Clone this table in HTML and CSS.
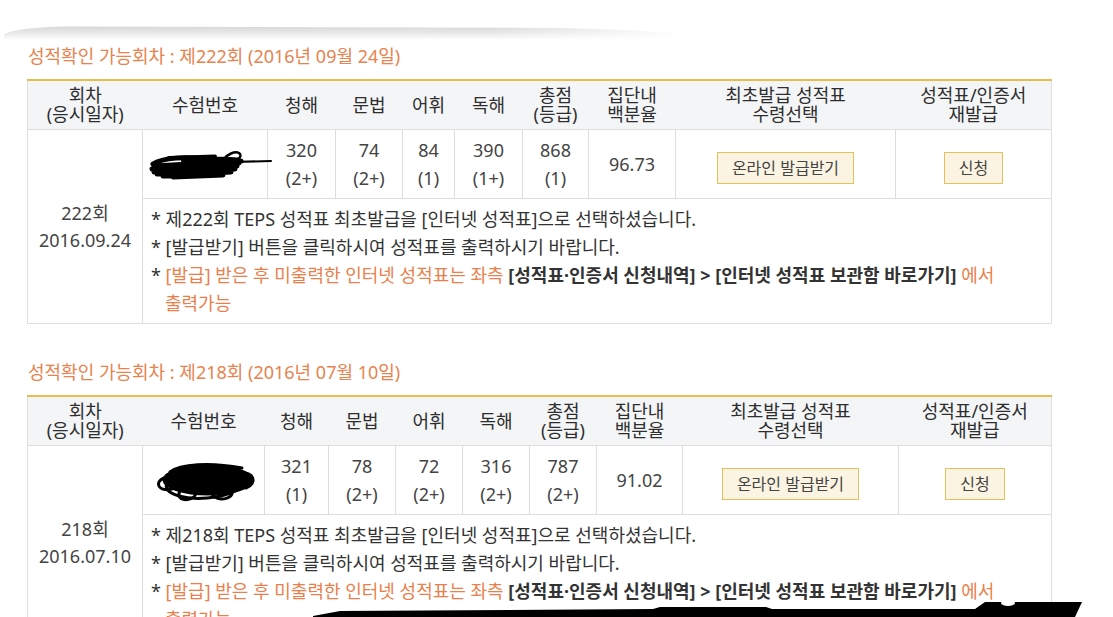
FILE: index.html
```html
<!DOCTYPE html>
<html lang="ko">
<head>
<meta charset="utf-8">
<title>성적확인</title>
<link rel="stylesheet" href="styles.css">
</head>
<body>
<div class="page">
  <svg class="curl" width="700" height="50" viewBox="0 0 700 50" aria-hidden="true">
    <defs>
      <linearGradient id="curlV" x1="0" y1="0" x2="0" y2="1">
        <stop offset="0" stop-color="#d8d8d8"/>
        <stop offset="0.5" stop-color="#e9e9e9"/>
        <stop offset="1" stop-color="#ffffff"/>
      </linearGradient>
      <linearGradient id="curlH" x1="0" y1="0" x2="1" y2="0">
        <stop offset="0" stop-color="#fff"/>
        <stop offset="0.7" stop-color="#fff"/>
        <stop offset="1" stop-color="#000"/>
      </linearGradient>
      <mask id="curlMask"><rect width="700" height="50" fill="url(#curlH)"/></mask>
    </defs>
    <path d="M4 34 C 14 30, 30 27, 70 26.5 L 560 28 C 610 29, 650 31, 680 34 L 680 39 L 4 40 Z" fill="url(#curlV)" mask="url(#curlMask)"/>
  </svg>

  <section class="round">
    <h2 class="round-title">성적확인 가능회차 : 제222회 (2016년 09월 24일)</h2>
    <table class="score-table t-a">
      <colgroup>
        <col class="c1"><col class="c2"><col class="c3"><col class="c4"><col class="c5">
        <col class="c6"><col class="c7"><col class="c8"><col class="c9"><col class="c10">
      </colgroup>
      <thead>
        <tr>
          <th>회차<br>(응시일자)</th>
          <th>수험번호</th>
          <th>청해</th>
          <th>문법</th>
          <th>어휘</th>
          <th>독해</th>
          <th>총점<br>(등급)</th>
          <th>집단내<br>백분율</th>
          <th>최초발급 성적표<br>수령선택</th>
          <th>성적표/인증서<br>재발급</th>
        </tr>
      </thead>
      <tbody>
        <tr>
          <td rowspan="2" class="round-cell">222회<br>2016.09.24</td>
          <td class="id-cell">
            <svg class="scribble" width="130" height="30" viewBox="0 0 130 30" aria-hidden="true">
              <g fill="none" stroke="#000" stroke-linecap="round" stroke-linejoin="round">
                <path stroke-width="5" d="M10 15 C 20 8, 45 8, 60 10 C 75 11, 90 9, 98 12 L 12 17 L 96 14 L 9 20 L 94 17 L 11 23 L 92 20 L 14 25 L 88 23 L 20 27 L 80 26 L 30 28"/>
                <path stroke-width="4" d="M26 9 L 72 7.5 M 40 12 L 88 10.5"/>
                <path stroke-width="2.5" d="M80 11 C 84 5, 92 2, 96 4 C 100 7, 95 11, 90 12"/>
                <path stroke-width="2" d="M88 13 L 128 12"/>
              </g>
            </svg>
          </td>
          <td>320<br>(2+)</td>
          <td>74<br>(2+)</td>
          <td>84<br>(1)</td>
          <td>390<br>(1+)</td>
          <td>868<br>(1)</td>
          <td>96.73</td>
          <td><button class="btn" type="button">온라인 발급받기</button></td>
          <td><button class="btn" type="button">신청</button></td>
        </tr>
        <tr>
          <td colspan="9" class="notes">
            <p>* 제222회 TEPS 성적표 최초발급을 [인터넷 성적표]으로 선택하셨습니다.</p>
            <p>* [발급받기] 버튼을 클릭하시여 성적표를 출력하시기 바랍니다.</p>
            <p>* <span class="accent">[발급] 받은 후 미출력한 인터넷 성적표는 좌측</span> <strong>[성적표·인증서 신청내역] &gt; [인터넷 성적표 보관함 바로가기]</strong> <span class="accent">에서<br>출력가능</span></p>
          </td>
        </tr>
      </tbody>
    </table>
  </section>

  <section class="round">
    <h2 class="round-title">성적확인 가능회차 : 제218회 (2016년 07월 10일)</h2>
    <table class="score-table t-b">
      <colgroup>
        <col class="c1"><col class="c2"><col class="c3"><col class="c4"><col class="c5">
        <col class="c6"><col class="c7"><col class="c8"><col class="c9"><col class="c10">
      </colgroup>
      <thead>
        <tr>
          <th>회차<br>(응시일자)</th>
          <th>수험번호</th>
          <th>청해</th>
          <th>문법</th>
          <th>어휘</th>
          <th>독해</th>
          <th>총점<br>(등급)</th>
          <th>집단내<br>백분율</th>
          <th>최초발급 성적표<br>수령선택</th>
          <th>성적표/인증서<br>재발급</th>
        </tr>
      </thead>
      <tbody>
        <tr>
          <td rowspan="2" class="round-cell">218회<br>2016.07.10</td>
          <td class="id-cell">
            <svg class="scribble" width="120" height="44" viewBox="0 0 120 44" aria-hidden="true">
              <g fill="none" stroke="#000" stroke-linecap="round" stroke-linejoin="round" stroke-width="3">
                <ellipse cx="58" cy="22" rx="44" ry="14" fill="#000"/>
                <ellipse cx="56" cy="25" rx="40" ry="15" transform="rotate(-5 56 25)"/>
                <path d="M14 20 C 4 24, 8 34, 22 31"/>
                <path d="M30 33 C 24 43, 42 45, 46 36"/>
                <path d="M62 36 C 66 44, 84 42, 82 33"/>
                <path d="M90 16 C 104 12, 108 26, 96 30"/>
                <path d="M20 14 C 30 6, 60 4, 92 10"/>
              </g>
            </svg>
          </td>
          <td>321<br>(1)</td>
          <td>78<br>(2+)</td>
          <td>72<br>(2+)</td>
          <td>316<br>(2+)</td>
          <td>787<br>(2+)</td>
          <td>91.02</td>
          <td><button class="btn" type="button">온라인 발급받기</button></td>
          <td><button class="btn" type="button">신청</button></td>
        </tr>
        <tr>
          <td colspan="9" class="notes">
            <p>* 제218회 TEPS 성적표 최초발급을 [인터넷 성적표]으로 선택하셨습니다.</p>
            <p>* [발급받기] 버튼을 클릭하시여 성적표를 출력하시기 바랍니다.</p>
            <p>* <span class="accent">[발급] 받은 후 미출력한 인터넷 성적표는 좌측</span> <strong>[성적표·인증서 신청내역] &gt; [인터넷 성적표 보관함 바로가기]</strong> <span class="accent">에서<br>출력가능</span></p>
          </td>
        </tr>
      </tbody>
    </table>
  </section>

  <svg class="tear" width="1113" height="22" viewBox="0 595 1113 22" aria-hidden="true">
    <polygon fill="#000" points="313,616 340,611 653,609 660,607 766,607 772,609 975,609 985,602 1082,602 1075,617 313,617"/>
    <ellipse cx="1008" cy="603" rx="7" ry="3" fill="#fff"/>
  </svg>
</div>
</body>
</html>
```

FILE: styles.css
```css
* {
  box-sizing: border-box;
}

html,
body {
  margin: 0;
  padding: 0;
  background: #fff;
}

body {
  font-family: "Noto Sans", "Noto Sans CJK KR", sans-serif;
  color: #444;
  overflow: hidden;
}

.page {
  position: relative;
  width: 1113px;
  height: 617px;
  padding: 44px 0 0 27px;
  overflow: hidden;
}

.curl {
  position: absolute;
  left: 0;
  top: 0;
}

.tear {
  position: absolute;
  left: 0;
  top: 595px;
}

.round + .round {
  margin-top: 36px;
}

.round-title {
  margin: 0 0 11px 1px;
  font-size: 18px;
  line-height: 24px;
  font-weight: 400;
  color: #e8834f;
}

.score-table {
  width: 1024px;
  table-layout: fixed;
  border-collapse: collapse;
  border-left: 1px solid #dedede;
  border-right: 1px solid #dedede;
  border-bottom: 1px solid #dedede;
}

.score-table th {
  background: #f4f5f7;
  border-top: 2px solid #e9bd4c;
  border-bottom: 1px solid #dedede;
  padding: 5px 2px;
  font-size: 18px;
  line-height: 19px;
  font-weight: 400;
  color: #2e2e2e;
  text-align: center;
  vertical-align: middle;
}

.score-table td {
  border: 1px solid #dedede;
  padding: 6px 2px;
  font-size: 18px;
  line-height: 28px;
  color: #444;
  text-align: center;
  vertical-align: middle;
}

/* column widths, first table */
.t-a .c1 { width: 115px; }
.t-a .c2 { width: 125px; }
.t-a .c3 { width: 68px; }
.t-a .c4 { width: 67px; }
.t-a .c5 { width: 52px; }
.t-a .c6 { width: 68px; }
.t-a .c7 { width: 66px; }
.t-a .c8 { width: 87px; }
.t-a .c9 { width: 220px; }
.t-a .c10 { width: 156px; }

/* column widths, second table */
.t-b .c1 { width: 115px; }
.t-b .c2 { width: 122px; }
.t-b .c3 { width: 64px; }
.t-b .c4 { width: 67px; }
.t-b .c5 { width: 67px; }
.t-b .c6 { width: 67px; }
.t-b .c7 { width: 67px; }
.t-b .c8 { width: 86px; }
.t-b .c9 { width: 216px; }
.t-b .c10 { width: 153px; }

.score-table td.round-cell {
  line-height: 27px;
  padding-top: 0;
  padding-bottom: 0;
}

.score-table td.id-cell {
  padding: 0;
  text-align: left;
}

.scribble {
  display: block;
  overflow: visible;
  margin-left: 7px;
}

.t-a .scribble {
  margin-left: 0;
}

.btn {
  display: inline-block;
  margin-top: 7px;
  padding: 0 14px;
  font-family: inherit;
  font-size: 16px;
  line-height: 30px;
  color: #444;
  background: #fcf4e2;
  border: 1px solid #e6c05a;
  border-radius: 0;
  vertical-align: middle;
}

.score-table td.notes {
  padding: 6px 8px 6px 22px;
  text-align: left;
  color: #333;
}

.notes p {
  margin: 0;
  text-indent: -14px;
}

.accent {
  color: #ea7f4c;
}

.notes strong {
  font-weight: 700;
  color: #333;
}
```
